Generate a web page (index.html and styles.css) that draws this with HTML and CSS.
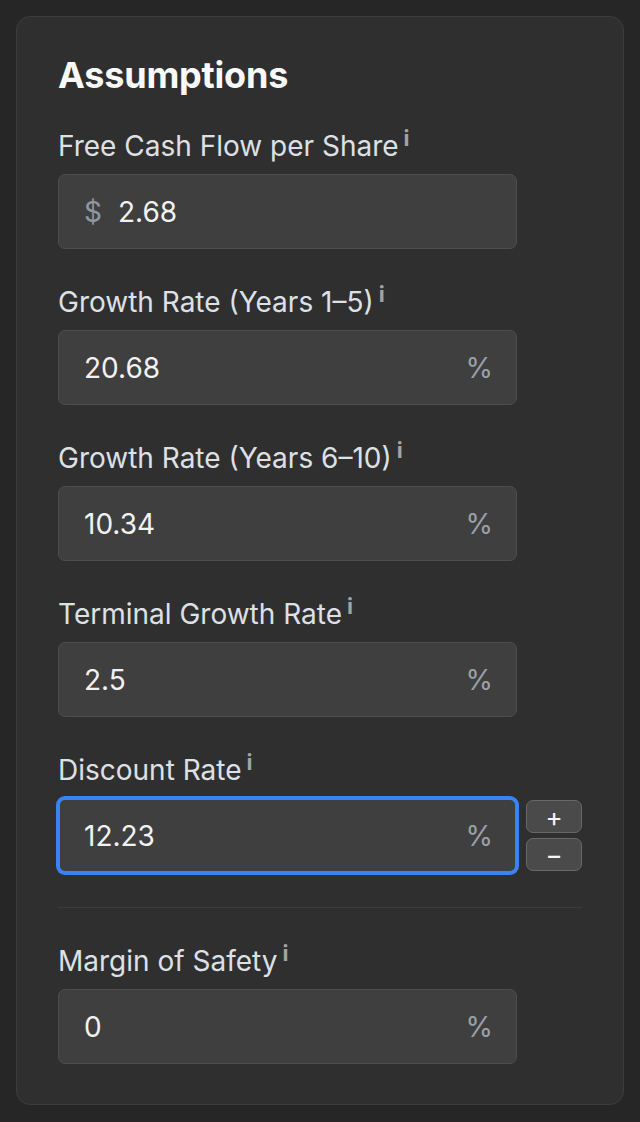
FILE: index.html
```html
<!DOCTYPE html>
<html lang="en">
<head>
<meta charset="utf-8">
<title>Assumptions</title>
<link rel="stylesheet" href="styles.css">
</head>
<body>
<div class="card">
  <h2 class="title">Assumptions</h2>
  <div class="fields">
    <div class="field">
      <label class="label">Free Cash Flow per Share<span class="info">i</span></label>
      <div class="row">
        <div class="input">
          <span class="prefix">$</span>
          <span class="value">2.68</span>
        </div>
      </div>
    </div>
    <div class="field">
      <label class="label">Growth Rate (Years 1–5)<span class="info">i</span></label>
      <div class="row">
        <div class="input">
          <span class="value">20.68</span>
          <span class="suffix">%</span>
        </div>
      </div>
    </div>
    <div class="field">
      <label class="label">Growth Rate (Years 6–10)<span class="info">i</span></label>
      <div class="row">
        <div class="input">
          <span class="value">10.34</span>
          <span class="suffix">%</span>
        </div>
      </div>
    </div>
    <div class="field">
      <label class="label">Terminal Growth Rate<span class="info">i</span></label>
      <div class="row">
        <div class="input">
          <span class="value">2.5</span>
          <span class="suffix">%</span>
        </div>
      </div>
    </div>
    <div class="field">
      <label class="label">Discount Rate<span class="info">i</span></label>
      <div class="row">
        <div class="input focused">
          <span class="value">12.23</span>
          <span class="suffix">%</span>
        </div>
        <div class="stepper">
          <button class="step">+</button>
          <button class="step">−</button>
        </div>
      </div>
    </div>
  </div>
  <hr class="divider">
  <div class="field">
    <label class="label">Margin of Safety<span class="info">i</span></label>
    <div class="row">
      <div class="input">
        <span class="value">0</span>
        <span class="suffix">%</span>
      </div>
    </div>
  </div>
</div>
</body>
</html>
```

FILE: styles.css
```css
* { box-sizing: border-box; }

html, body {
  margin: 0;
  padding: 0;
  background: #262626;
  font-family: Inter, "Noto Sans", "Liberation Sans", sans-serif;
}

body {
  padding: 16px;
}

.card {
  width: 608px;
  background: #2f2f2f;
  border: 1px solid #3c3c3c;
  border-radius: 14px;
  padding: 36px 41px 40px 41px;
}

.title {
  margin: 0 0 33px 0;
  font-size: 36px;
  line-height: 44px;
  font-weight: 700;
  color: #fafafa;
  letter-spacing: -0.2px;
}

.fields {
  display: flex;
  flex-direction: column;
  gap: 37px;
}

.field {
  display: flex;
  flex-direction: column;
  gap: 12px;
}

.label {
  display: block;
  height: 32px;
  font-size: 28px;
  line-height: 32px;
  color: #dde1e6;
  white-space: nowrap;
}

.info {
  display: inline-block;
  font-size: 22px;
  font-weight: 700;
  color: #a3a3a3;
  margin-left: 5px;
  vertical-align: top;
  line-height: 16px;
}

.row {
  display: flex;
  align-items: center;
  gap: 9px;
}

.input {
  width: 459px;
  height: 75px;
  background: #3f3f3f;
  border: 1px solid #4d4d4d;
  border-radius: 7px;
  display: flex;
  align-items: center;
  padding: 0 23px 0 25px;
  font-size: 28px;
}

.input.focused {
  border: 2px solid #3b82f6;
  box-shadow: 0 0 0 2px #3b82f6;
  padding: 0 22px 0 24px;
  border-radius: 7px;
}

.prefix {
  color: #8e98a3;
  margin-right: 16px;
}

.value {
  flex: 1;
  color: #f2f2f2;
}

.suffix {
  color: #9aa1a9;
}

.stepper {
  display: flex;
  flex-direction: column;
  gap: 5px;
}

.step {
  width: 56px;
  height: 33px;
  padding: 0;
  margin: 0;
  background: #4a4a4a;
  border: 1px solid #686868;
  border-radius: 7px;
  color: #f5f5f5;
  font-family: Inter, "Noto Sans", sans-serif;
  font-size: 26px;
  font-weight: 400;
  line-height: 1;
  display: flex;
  align-items: center;
  justify-content: center;
}

.divider {
  border: 0;
  height: 1px;
  background: #3c3c3c;
  margin: 34px 0 37px 0;
}
```
